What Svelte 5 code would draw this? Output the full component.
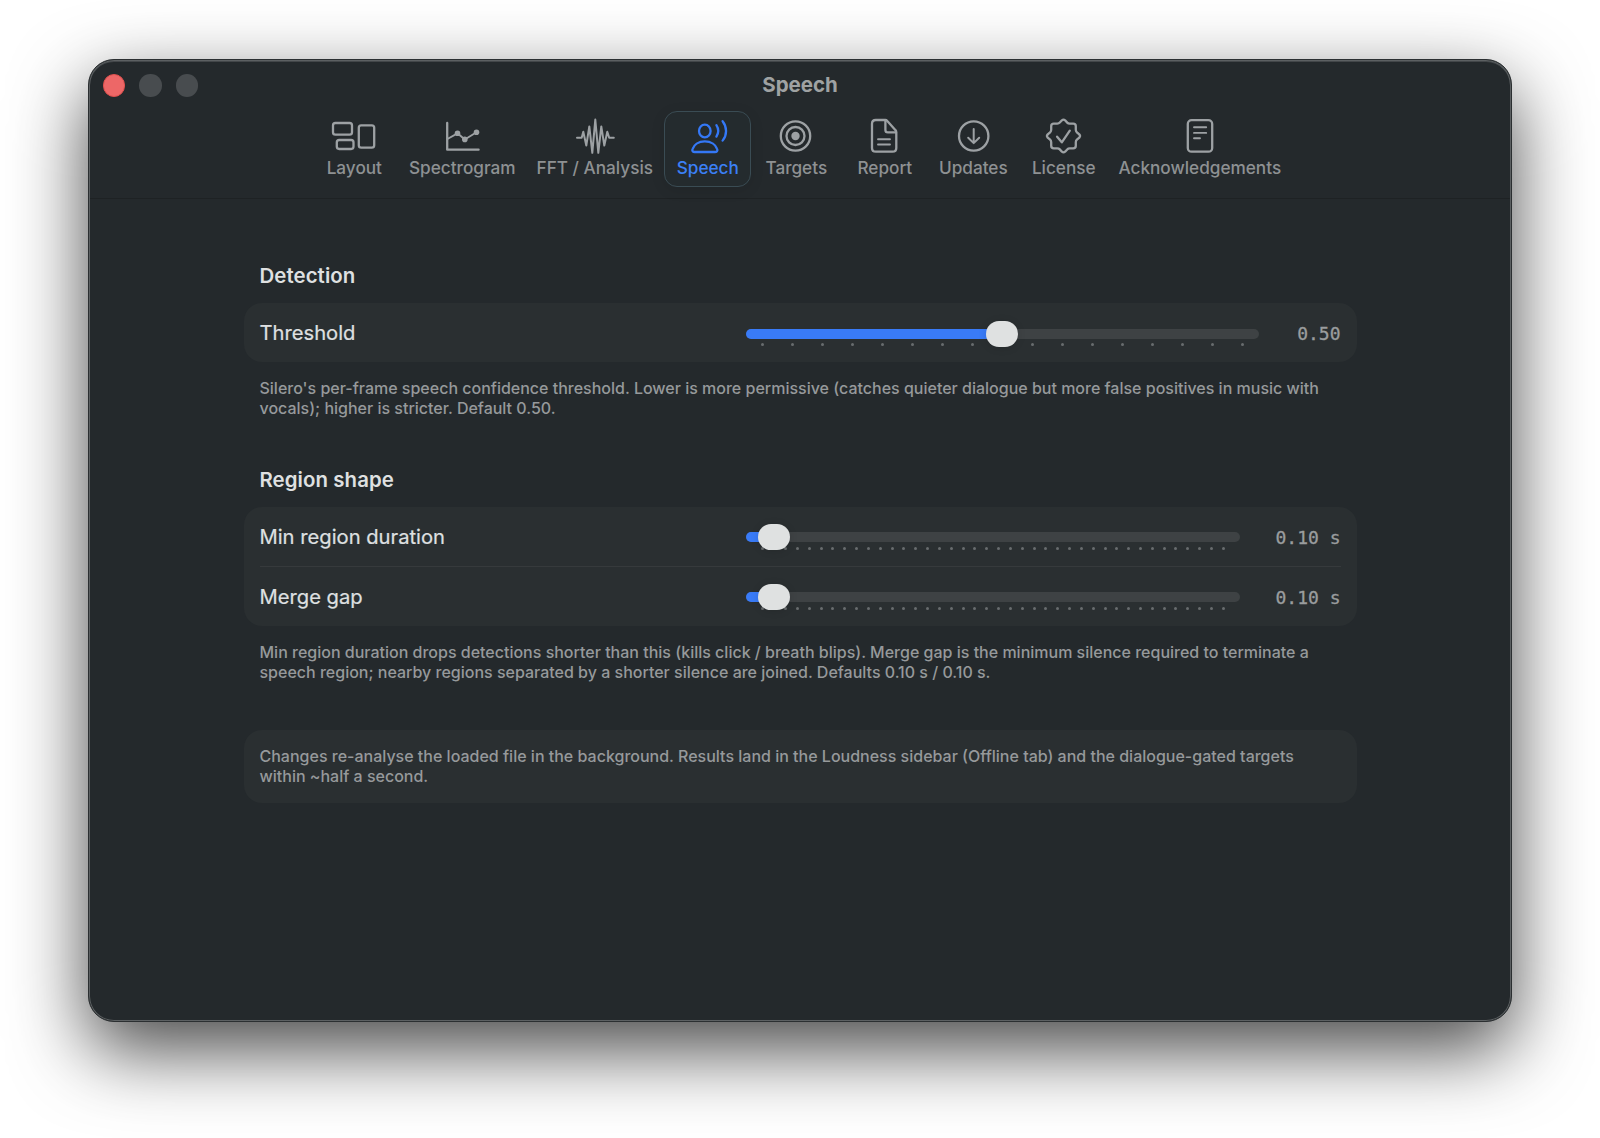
<script lang="ts">
  type Setting = {
    label: string;
    value: number;
    min: number;
    max: number;
    ticks: number;
    unit?: string;
  };

  type Section = {
    title: string;
    settings: Setting[];
    footer: string;
  };

  const tabs = [
    'Layout',
    'Spectrogram',
    'FFT / Analysis',
    'Speech',
    'Targets',
    'Report',
    'Updates',
    'License',
    'Acknowledgements',
  ];

  let active = $state('Speech');

  let sections = $state<Section[]>([
    {
      title: 'Detection',
      settings: [{ label: 'Threshold', value: 0.5, min: 0.1, max: 0.9, ticks: 17 }],
      footer:
        "Silero's per-frame speech confidence threshold. Lower is more permissive (catches quieter dialogue but more false positives in music with\nvocals); higher is stricter. Default 0.50.",
    },
    {
      title: 'Region shape',
      settings: [
        { label: 'Min region duration', value: 0.1, min: 0.05, max: 2, ticks: 40, unit: 's' },
        { label: 'Merge gap', value: 0.1, min: 0.05, max: 2, ticks: 40, unit: 's' },
      ],
      footer:
        'Min region duration drops detections shorter than this (kills click / breath blips). Merge gap is the minimum silence required to terminate a\nspeech region; nearby regions separated by a shorter silence are joined. Defaults 0.10 s / 0.10 s.',
    },
  ]);

  const note =
    'Changes re-analyse the loaded file in the background. Results land in the Loudness sidebar (Offline tab) and the dialogue-gated targets\nwithin ~half a second.';

  const fraction = (s: Setting) => (s.value - s.min) / (s.max - s.min);
  const format = (s: Setting) => s.value.toFixed(2) + (s.unit ? ` ${s.unit}` : '');
</script>

{#snippet icon(name: string)}
  <svg class="tab-icon" viewBox="0 0 48 38" aria-hidden="true">
    {#if name === 'Layout'}
      <rect x="3" y="6" width="19" height="11.7" rx="2.4" />
      <rect x="6.8" y="23" width="16.7" height="9" rx="2.4" />
      <rect x="28.8" y="8.3" width="15.4" height="22.4" rx="2.4" />
    {:else if name === 'Spectrogram'}
      <path d="M9.2 6V32.7H40.6" />
      <path d="M9.4 22L19.5 16.3L26.8 22.5L38.5 15.3" stroke-width="1.9" />
      <g class="solid">
        <circle cx="19.5" cy="16.3" r="2.8" />
        <circle cx="26.8" cy="22.4" r="2.8" />
        <circle cx="38.5" cy="15.3" r="2.8" />
      </g>
    {:else if name === 'FFT / Analysis'}
      <path
        d="M6 20.7H10.7L12.3 14.8L15.3 28.6L18.3 9.4L21.3 35.8L24.3 2.6L27.3 35.8L30.3 9.4L33.3 28.6L36.3 14.8L38.2 20.7H42.8"
        stroke-width="2"
      />
    {:else if name === 'Speech'}
      <ellipse cx="20.8" cy="14" rx="5.8" ry="6.3" />
      <path d="M10.8 35H30.9C32.9 35 33.8 33.8 33.2 32.1C31.8 27.8 27.2 24.4 20.8 24.4S9.9 27.8 8.5 32.1C7.9 33.8 8.8 35 10.8 35Z" />
      <path d="M32.4 8.2C34.6 11.6 34.6 16.2 32.4 19.6" />
      <path d="M38.6 4.2C43.2 9.9 43.2 17.9 38.6 23.6" />
    {:else if name === 'Targets'}
      <circle cx="23.5" cy="19" r="14.7" />
      <circle cx="23.5" cy="19" r="9" />
      <circle class="solid" cx="23.5" cy="19" r="4.2" />
    {:else if name === 'Report'}
      <path d="M24.2 3H14.8C12.4 3 11 4.4 11 6.8V31C11 33.4 12.4 34.7 14.8 34.7H31.5C33.9 34.7 35.3 33.4 35.3 31V15.2C35.3 14.3 35 13.6 34.3 12.9L26.3 4C25.7 3.3 25 3 24.2 3Z" />
      <path d="M24.4 3.5V13C24.4 14.7 25.2 15.4 26.8 15.4H35" />
      <path d="M17 22.3H29M17 27.5H29" stroke-width="1.9" />
    {:else if name === 'Updates'}
      <circle cx="24.7" cy="19" r="14.7" />
      <path d="M24.7 12V26M19.2 20.7L24.7 26.1L30.2 20.7" stroke-width="2" />
    {:else if name === 'License'}
      <path d="M21.9 3.3Q23.5 1.9 25.1 3.3L27.2 5.6Q28.2 6.7 29.7 6.7H33.2Q35.8 6.7 35.8 9.3V12.8Q35.8 14.3 36.9 15.3L39.3 17.4Q40.8 19 39.3 20.6L36.9 22.7Q35.8 23.7 35.8 25.2V28.7Q35.8 31.3 33.2 31.3H29.7Q28.2 31.3 27.2 32.4L25.1 34.7Q23.5 36.1 21.9 34.7L19.8 32.4Q18.8 31.3 17.3 31.3H13.8Q11.2 31.3 11.2 28.7V25.2Q11.2 23.7 10.1 22.7L7.7 20.6Q6.2 19 7.7 17.4L10.1 15.3Q11.2 14.3 11.2 12.8V9.3Q11.2 6.7 13.8 6.7H17.3Q18.8 6.7 19.8 5.6Z" />
      <path d="M17.1 19.7L21.8 25.3L29.8 13.6" />
    {:else}
      <rect x="11.8" y="3.2" width="24.4" height="31.5" rx="3.8" />
      <path d="M18 10.3H30.2M18 15.9H30.2M18 21.3H24" stroke-width="1.9" />
    {/if}
  </svg>
{/snippet}

<div class="desktop">
  <div class="window">
    <header class="toolbar">
      <div class="titlebar">
        <div class="lights">
          <span class="light close"></span>
          <span class="light"></span>
          <span class="light"></span>
        </div>
        <h1 class="title">{active}</h1>
      </div>
      <nav class="tabs">
        {#each tabs as tab}
          <button class="tab" class:active={tab === active} onclick={() => (active = tab)}>
            {@render icon(tab)}
            <span class="tab-label">{tab}</span>
          </button>
        {/each}
      </nav>
    </header>

    <main class="content">
      {#each sections as section}
        <section class="section">
          <h2 class="section-title">{section.title}</h2>
          <div class="card">
            {#each section.settings as setting}
              <div class="row">
                <span class="row-label">{setting.label}</span>
                <div class="control">
                  <div class="slider">
                    <div class="track">
                      <div class="fill" style="width: calc(16px + (100% - 32px) * {fraction(setting)})"></div>
                    </div>
                    <div class="ticks">
                      {#each { length: setting.ticks } as _}
                        <span class="tick"></span>
                      {/each}
                    </div>
                    <div class="thumb" style="left: calc((100% - 32px) * {fraction(setting)})"></div>
                  </div>
                  <span class="value" class:wide={setting.unit}>{format(setting)}</span>
                </div>
              </div>
            {/each}
          </div>
          <p class="small footer">{section.footer}</p>
        </section>
      {/each}

      <div class="card note">
        <p class="small">{note}</p>
      </div>
    </main>
  </div>
</div>

<style>
  :global(body) {
    background: #fff;
  }

  .desktop {
    box-sizing: border-box;
    width: 1600px;
    height: 1138px;
    padding: 59px 88px 0;
    overflow: hidden;
    font-family: Inter, 'Liberation Sans', sans-serif;
    color: #dfe0e1;
  }

  .window {
    box-sizing: border-box;
    height: 963px;
    border: 1px solid #2b2f31;
    border-radius: 26px;
    background: #24292c;
    box-shadow:
      inset 0 0 0 1px #5c6062,
      inset 0 1px 0 1px #62666880,
      0 28px 76px rgba(0, 0, 0, 0.72);
  }

  .toolbar {
    box-sizing: border-box;
    height: 139px;
    margin: 0 1px;
    border-bottom: 1px solid #1e2224;
  }

  .titlebar {
    display: grid;
    grid-template-columns: 1fr auto 1fr;
    align-items: center;
    height: 51px;
  }

  .lights {
    display: flex;
    gap: 14px;
    padding: 0 0 0 12.5px;
  }

  .light {
    box-sizing: border-box;
    width: 22.5px;
    height: 22.5px;
    border-radius: 50%;
    background: #484c4f;
  }

  .close {
    background: #ed6767;
    border: 1px solid #e0504d;
  }

  .title {
    margin: 0 0 1px;
    font-size: 20.5px;
    line-height: 24px;
    font-weight: 700;
    color: #9fa2a3;
  }

  .tabs {
    display: grid;
    grid-template-columns: 87px 126px 136px repeat(4, 87px) 91px 178px;
    column-gap: 1.5px;
    justify-content: center;
    transform: translateX(-1px);
  }

  .tab {
    display: flex;
    flex-direction: column;
    align-items: center;
    box-sizing: border-box;
    height: 76px;
    margin: 0;
    padding: 5px 0 0 1.6px;
    border: 1px solid transparent;
    border-radius: 13px;
    background: none;
    color: #9da1a4;
    font: inherit;
  }

  .tab.active {
    border-color: #3a4c54;
    background: #242b2e;
    box-shadow: 0 3px 14px rgba(0, 0, 0, 0.1);
    color: #3478f6;
  }

  .tab-icon {
    width: 48px;
    height: 38px;
    flex-shrink: 0;
    fill: none;
    stroke: currentColor;
    stroke-width: 2.3;
    stroke-linecap: round;
    stroke-linejoin: round;
  }

  .solid {
    fill: currentColor;
    stroke: none;
  }

  .tab-label {
    margin-top: 2px;
    font-size: 17.2px;
    line-height: 22px;
    font-weight: 500;
    white-space: nowrap;
    color: #8e9193;
  }

  .active .tab-label {
    color: #3b80f7;
  }

  .content {
    width: 1113px;
    margin: 0 auto;
    padding-top: 65px;
  }

  .section {
    margin-bottom: 49.2px;
  }

  .section:last-of-type {
    margin-bottom: 47.2px;
  }

  .section-title {
    margin: 0 16px 15px;
    font-size: 20.4px;
    line-height: 24px;
    font-weight: 600;
    letter-spacing: 0.08px;
  }

  .card {
    border-radius: 18px;
    background: #2a2f31;
  }

  .row {
    display: flex;
    align-items: center;
    box-sizing: border-box;
    height: 58.5px;
    margin: 0 16px;
  }

  .row:not(:last-child) {
    height: 59px;
  }

  .row + .row {
    height: 60px;
    border-top: 1px solid #363a3c;
  }

  .row-label {
    width: 486.5px;
    font-size: 20.2px;
    -webkit-text-stroke: 0.2px;
  }

  .control {
    flex: 1;
    display: flex;
    align-items: center;
  }

  .slider {
    position: relative;
    flex: 1;
    padding-top: 17.5px;
    height: 15px;
  }

  .track {
    height: 10px;
    margin-top: -5px;
    border-radius: 5px;
    background: #3e4244;
    overflow: hidden;
  }

  .fill {
    height: 100%;
    background: #397bf7;
  }

  .ticks {
    display: flex;
    justify-content: space-between;
    padding: 4.3px 14.5px 0;
  }

  .tick {
    width: 3px;
    height: 3px;
    border-radius: 50%;
    background: #686c6e;
  }

  .thumb {
    position: absolute;
    top: 4.5px;
    width: 32px;
    height: 26px;
    border-radius: 13px;
    background: #dfe1e1;
    box-shadow: 0 1px 8px rgba(0, 0, 0, 0.12);
  }

  .value {
    width: 82px;
    padding-top: 2px;
    font-family: 'DejaVu Sans Mono', 'Liberation Mono', monospace;
    font-size: 18px;
    text-align: right;
    white-space: pre;
    color: #9a9d9e;
    -webkit-text-stroke: 0.3px;
  }

  .value.wide {
    width: 101px;
  }

  .small {
    margin: 0;
    font-size: 16px;
    line-height: 20.5px;
    font-weight: 500;
    white-space: pre;
    color: #96999b;
  }

  .footer {
    padding: 16px 16px 0;
  }

  .note {
    padding: 16px;
  }
</style>
